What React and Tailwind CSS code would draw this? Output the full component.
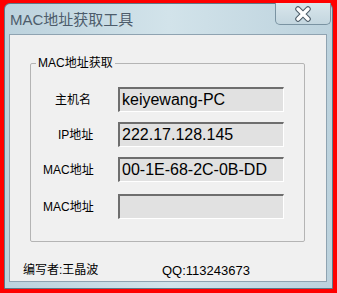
export default function App() {
  const rows = [
    { label: '主机名', value: 'keiyewang-PC', pl: 'pl-[24px]', mt: 'mt-0' },
    { label: 'IP地址', value: '222.17.128.145', pl: 'pl-[27px]', mt: 'mt-[10px]' },
    { label: 'MAC地址', value: '00-1E-68-2C-0B-DD', pl: 'pl-[12px]', mt: 'mt-[10px]' },
    { label: 'MAC地址', value: '', pl: 'pl-[12px]', mt: 'mt-[12px]' },
  ];

  return (
    <div
      className="w-[337px] h-[293px] bg-[#ff0000] pt-[3px] pl-[4px] overflow-hidden"
      style={{ fontFamily: '"Liberation Sans", "Noto Sans CJK SC", sans-serif' }}
    >
      {/* window frame */}
      <div className="relative w-[329px] h-[286px] rounded-t-[6px] border border-[#5f7888] bg-gradient-to-r from-[#bcd2dd] via-[#d2e3ea] to-[#bcd2dd] flex flex-col">
        {/* title bar */}
        <div className="h-[30px] flex items-start pl-[5px] pt-[7px]">
          <span className="text-[15px] leading-[18px] text-[#4d5c6b]">MAC地址获取工具</span>
        </div>

        {/* close button */}
        <div className="absolute top-[-1px] right-[1px] w-[56px] h-[22px] rounded-b-[5px] border border-t-0 border-[#7a93a2] bg-gradient-to-b from-[#d9e6ec] to-[#c3d6df] flex items-center justify-center">
          <svg width="20" height="16" viewBox="0 0 20 16">
            <path d="M5 3 L15 13 M15 3 L5 13" stroke="#4a5a66" strokeWidth="5.5" strokeLinecap="round" />
            <path d="M5 3 L15 13 M15 3 L5 13" stroke="#ffffff" strokeWidth="3.5" strokeLinecap="round" />
          </svg>
        </div>

        {/* client area */}
        <div className="ml-[4px] w-[318px] h-[248px] border border-[#8fa3b1] bg-[#f0f0f0] flex flex-col">
          <fieldset className="ml-[20px] mt-[21px] w-[275px] h-[186px] border border-[#b4b4b4] rounded-[2px]">
            <legend className="ml-[5px] px-[2px] text-[12px] leading-[14px] text-black">MAC地址获取</legend>
            <div className="flex flex-col pt-[17px]">
              {rows.map((r, i) => (
                <div key={i} className={`flex items-center ${r.mt}`}>
                  <div className={`w-[87px] ${r.pl} text-[12px] leading-[14px] text-black`}>{r.label}</div>
                  <div className="w-[166px] h-[25px] border-t-2 border-l-2 border-t-[#6e6e6e] border-l-[#6e6e6e] border-r border-b border-r-white border-b-white bg-[#e1e1e1] flex items-center pl-[2px] text-[16px] text-black">
                    {r.value}
                  </div>
                </div>
              ))}
            </div>
          </fieldset>

          {/* footer */}
          <div className="flex pl-[13px] mt-[21px] text-[13px] leading-[15px] text-black">
            <span className="w-[139px] text-[12px]">编写者:王晶波</span>
            <span>QQ:113243673</span>
          </div>
        </div>
      </div>
    </div>
  );
}
